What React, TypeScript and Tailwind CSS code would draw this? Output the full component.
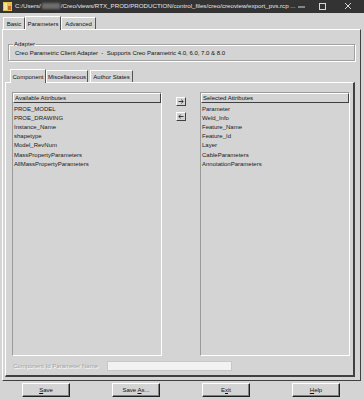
import React from "react";

const raised =
  "border border-t-white border-l-white border-r-[#404040] border-b-[#404040]";

function Tab({ label, selected, w }: { label: string; selected?: boolean; w: number }) {
  return (
    <div
      style={{ width: w }}
      className={
        "flex items-center justify-center border-t border-l border-r border-t-white border-l-white border-r-[#555] " +
        (selected ? "h-[14px] bg-[#d4d4d4] relative z-10 -mb-[1px] -mx-[2px]" : "h-[12px]")
      }
    >
      <span className="leading-none">{label}</span>
    </div>
  );
}

function ListBox({ title, items }: { title: string; items: string[] }) {
  return (
    <div className="w-[150px] h-[264px] flex flex-col border border-t-[#9a9a9a] border-l-[#9a9a9a] border-r-white border-b-white">
      <div className={"h-[10px] flex items-center pl-[1px] bg-[#d4d4d4] " + raised}>
        <span className="leading-none">{title}</span>
      </div>
      <div className="flex flex-col pt-[1px] pl-[1px]">
        {items.map((it) => (
          <div key={it} className="h-[9.2px] flex items-center leading-none text-[#1a1a1a]">
            {it}
          </div>
        ))}
      </div>
    </div>
  );
}

function Btn({ children }: { children: React.ReactNode }) {
  return (
    <div className="w-[48px] h-[14px] flex items-center justify-center border border-t-white border-l-white border-r-[#202020] border-b-[#202020] shadow-[inset_-1px_-1px_0_#808080]">
      <span className="leading-none">{children}</span>
    </div>
  );
}

function Arrow({ dir }: { dir: "right" | "left" }) {
  return (
    <div className={"w-[10px] h-[9px] flex items-center justify-center " + raised}>
      <svg width="6" height="5" viewBox="0 0 6 5">
        {dir === "right" ? (
          <g stroke="#111" strokeWidth="0.8" fill="none">
            <line x1="0.5" y1="2.5" x2="5.2" y2="2.5" />
            <polyline points="3.3,0.7 5.2,2.5 3.3,4.3" />
          </g>
        ) : (
          <g stroke="#111" strokeWidth="0.8" fill="none">
            <line x1="0.8" y1="2.5" x2="5.5" y2="2.5" />
            <polyline points="2.7,0.7 0.8,2.5 2.7,4.3" />
          </g>
        )}
      </svg>
    </div>
  );
}

export default function App() {
  return (
    <div className="w-[364px] h-[400px] bg-[#d4d4d4] flex flex-col overflow-hidden font-['Liberation_Sans',Arial,sans-serif] text-[6px] text-[#111]">
      {/* Title bar */}
      <div className="h-[13px] bg-[#333333] flex items-center shrink-0">
        <svg width="9" height="9" viewBox="0 0 9 9" className="ml-[3px]">
          <rect x="0" y="0" width="9" height="9" fill="#e7c24a" />
          <rect x="1" y="1" width="3" height="7" fill="#f3e3a0" />
          <rect x="5" y="4" width="3" height="4" fill="#c56a2a" />
        </svg>
        <div className="ml-[3px] flex items-center text-[#e6e6e6] text-[6.2px] leading-none whitespace-nowrap">
          <span>C:/Users/</span>
          <span className="w-[18px] h-[6px] bg-[#6d6d6d] blur-[1px] mx-[1px]" />
          <span>/Creo/views/RTX_PROD/PRODUCTION/control_files/creo/creoview/export_pvs.rcp ...</span>
        </div>
        <div className="flex-1" />
        <svg width="60" height="13" viewBox="0 0 60 13" className="mr-[6px]">
          <line x1="0" y1="7" x2="7" y2="7" stroke="#d8d8d8" strokeWidth="1" />
          <rect x="21.5" y="3.5" width="6" height="6" fill="none" stroke="#d8d8d8" strokeWidth="1" />
          <line x1="47" y1="3" x2="53" y2="9" stroke="#d8d8d8" strokeWidth="1" />
          <line x1="53" y1="3" x2="47" y2="9" stroke="#d8d8d8" strokeWidth="1" />
        </svg>
      </div>

      {/* Top tabs */}
      <div className="h-[16px] flex items-end pl-[3px] shrink-0 gap-[2px]">
        <Tab label="Basic" w={22} />
        <Tab label="Parameters" selected w={36} />
        <Tab label="Advanced" w={35} />
      </div>

      {/* Outer panel */}
      <div className="ml-[2px] w-[359px] h-[352px] shrink-0 flex flex-col border border-t-white border-l-white border-r-[#404040] border-b-[#404040]">
        <fieldset className="ml-[5px] mt-[11px] w-[347px] h-[20px] border border-[#a2a2a2] shadow-[inset_1px_1px_0_#fff,1px_1px_0_#fff] px-[6px]">
          <legend className="px-[1px] -ml-[2px] leading-none">Adapter</legend>
          <div className="leading-none pt-[3px]">
            Creo Parametric Client Adapter&nbsp; - &nbsp;Supports Creo Parametric 4.0, 6.0, 7.0 &amp; 8.0
          </div>
        </fieldset>

        {/* Inner tabs */}
        <div className="mt-[8px] h-[13px] flex items-end pl-[9px] gap-[2px]">
          <Tab label="Component" selected w={36} />
          <Tab label="Miscellaneous" w={42} />
          <Tab label="Author States" w={43} />
        </div>

        {/* Inner panel */}
        <div className="ml-[2px] w-[350px] h-[295px] flex flex-col border border-t-white border-l-white border-r-[#404040] border-b-[#404040] border-r-2 border-b-2">
          <div className="flex mt-[9px] ml-[6px]">
            <ListBox
              title="Available Attributes"
              items={[
                "PROE_MODEL",
                "PROE_DRAWING",
                "Instance_Name",
                "shapetype",
                "Model_RevNum",
                "MassPropertyParameters",
                "AllMassPropertyParameters",
              ]}
            />
            <div className="w-[38px] flex flex-col items-center pt-[5px] gap-[6px]">
              <Arrow dir="right" />
              <Arrow dir="left" />
            </div>
            <ListBox
              title="Selected Attributes"
              items={[
                "Parameter",
                "Weld_Info",
                "Feature_Name",
                "Feature_Id",
                "Layer",
                "CableParameters",
                "AnnotationParameters",
              ]}
            />
          </div>
          <div className="flex items-center mt-[5px] ml-[7px]">
            <span className="w-[94px] leading-none text-[#a3a3a3] [text-shadow:1px_1px_0_#fff]">
              Component Id Parameter Name
            </span>
            <div className="w-[125px] h-[10px] bg-[#f2f2f2] border border-[#c8c8c8]" />
          </div>
        </div>
      </div>

      {/* Bottom buttons */}
      <div className="flex mt-[2px] pl-[22px] gap-[42px]">
        <Btn>
          <u>S</u>ave
        </Btn>
        <Btn>
          Save <u>A</u>s...
        </Btn>
        <Btn>
          E<u>x</u>it
        </Btn>
        <Btn>
          <u>H</u>elp
        </Btn>
      </div>
    </div>
  );
}
